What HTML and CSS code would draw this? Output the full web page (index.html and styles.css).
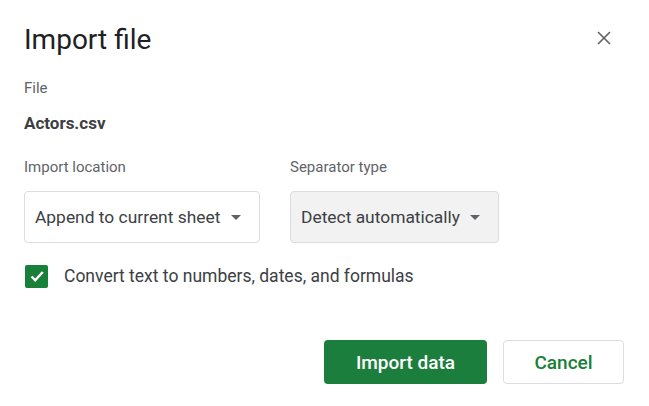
FILE: index.html
```html
<!DOCTYPE html>
<html>
<head>
<meta charset="utf-8">
<link rel="stylesheet" href="styles.css">
</head>
<body>
<div class="dialog">
  <div class="header">
    <h1 class="title">Import file</h1>
    <button class="close" aria-label="Close">
      <svg width="14" height="14" viewBox="0 0 14 14"><path d="M1 1L13 13M13 1L1 13" stroke="#5f6368" stroke-width="1.6" fill="none"/></svg>
    </button>
  </div>
  <div class="label file-label">File</div>
  <div class="filename">Actors.csv</div>
  <div class="fields">
    <div class="field field-loc">
      <div class="label">Import location</div>
      <div class="select">
        <span>Append to current sheet</span>
        <span class="arrow"></span>
      </div>
    </div>
    <div class="field field-sep">
      <div class="label">Separator type</div>
      <div class="select select-grey">
        <span>Detect automatically</span>
        <span class="arrow"></span>
      </div>
    </div>
  </div>
  <label class="check-row">
    <span class="checkbox">
      <svg width="18" height="18" viewBox="0 0 18 18"><path d="M3.5 9.5L7.2 13.2L14.8 5" stroke="#fff" stroke-width="2.4" fill="none"/></svg>
    </span>
    <span class="check-text">Convert text to numbers, dates, and formulas</span>
  </label>
  <div class="actions">
    <button class="btn btn-primary">Import data</button>
    <button class="btn btn-secondary">Cancel</button>
  </div>
</div>
</body>
</html>
```

FILE: styles.css
```css
* { box-sizing: border-box; }
html, body { margin: 0; padding: 0; background: #fff; }
body { font-family: Roboto, "Noto Sans", sans-serif; color: #202124; }

.dialog {
  width: 649px;
  height: 406px;
  padding: 24px 25px 0 24px;
  display: flex;
  flex-direction: column;
}

.header {
  display: flex;
  align-items: center;
  justify-content: space-between;
  height: 32px;
}
.title {
  margin: 0;
  font-size: 28px;
  font-weight: 400;
  line-height: 32px;
  color: #202124;
}
.close {
  border: 0;
  background: none;
  padding: 0;
  width: 24px;
  height: 24px;
  display: flex;
  align-items: center;
  justify-content: center;
  margin-right: 8px;
  margin-top: -4px;
}

.label {
  font-size: 15px;
  line-height: 20px;
  color: #5f6368;
}
.file-label { margin-top: 22px; }
.filename {
  margin-top: 14px;
  font-size: 17px;
  font-weight: 700;
  line-height: 22px;
  color: #3c4043;
}

.fields {
  display: flex;
  gap: 30px;
  margin-top: 23px;
}
.field { display: flex; flex-direction: column; gap: 14px; }
.field-loc .select { width: 236px; }
.field-sep .select { width: 209px; }

.select {
  height: 52px;
  border: 1px solid #dadce0;
  border-radius: 4px;
  display: flex;
  align-items: center;
  justify-content: space-between;
  padding: 0 18px 0 10px;
  font-size: 17.4px;
  color: #3c4043;
  background: #fff;
}
.select-grey { background: #f2f2f2; padding-left: 10px; }
.arrow {
  width: 0;
  height: 0;
  border-left: 5px solid transparent;
  border-right: 5px solid transparent;
  border-top: 5px solid #5f6368;
}

.check-row {
  margin-top: 21px;
  display: flex;
  align-items: center;
  gap: 16px;
  height: 24px;
}
.checkbox {
  width: 23px;
  height: 23px;
  margin-left: 1px;
  background: #188038;
  border-radius: 2px;
  display: flex;
  align-items: center;
  justify-content: center;
}
.check-text {
  font-size: 17.5px;
  color: #3c4043;
}

.actions {
  margin-top: 52px;
  display: flex;
  justify-content: flex-end;
  gap: 16px;
}
.btn {
  height: 44px;
  border-radius: 4px;
  font-family: Roboto, "Noto Sans", sans-serif;
  font-size: 19px;
  font-weight: 500;
  padding: 0;
}
.btn-primary {
  width: 163px;
  background: #1b7e3c;
  color: #fff;
  border: 0;
}
.btn-secondary {
  width: 121px;
  background: #fff;
  color: #188038;
  border: 1px solid #dadce0;
}
```
